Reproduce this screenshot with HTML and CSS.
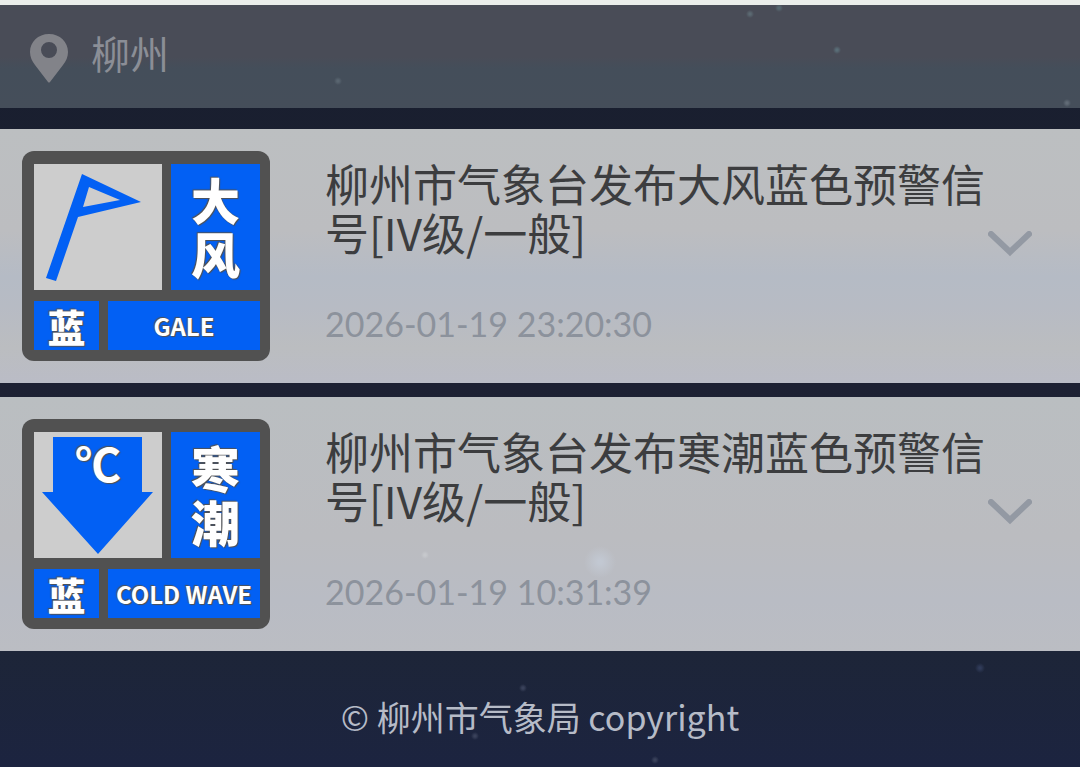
FILE: index.html
```
<!DOCTYPE html>
<html lang="zh-CN">
<head>
<meta charset="utf-8">
<meta name="viewport" content="width=device-width, initial-scale=1">
<title>柳州</title>
<link rel="stylesheet" href="styles.css">
</head>
<body>
<header class="location">
  <svg class="pin" viewBox="0 0 40 50" aria-hidden="true"><path fill-rule="evenodd" d="M20 1C9 1 1 9 1 19c0 5 2 9 5 13l13 17q1 1 2 0l13-17c3-4 5-8 5-13C39 9 31 1 20 1zM20 9a8 8 0 1 1 0 16 8 8 0 0 1 0-16z"/></svg>
  <h1 class="city">柳州</h1>
</header>
<main class="alerts">
  <article class="alert">
    <div class="badge">
      <div class="badge-row badge-top">
        <div class="symbol">
          <svg viewBox="0 0 128 126" role="img" aria-label="大风"><path fill-rule="evenodd" d="M48 10L107 38 44 53 22 117 12 114zM55 23L49 43 86 36z"/></svg>
        </div>
        <div class="kind"><span>大</span><span>风</span></div>
      </div>
      <div class="badge-row badge-bottom">
        <div class="level">蓝</div>
        <div class="kind-en">GALE</div>
      </div>
    </div>
    <div class="info">
      <h2 class="title">柳州市气象台发布大风蓝色预警信号[IV级/一般]</h2>
      <time class="time" datetime="2026-01-19T23:20:30">2026-01-19 23:20:30</time>
    </div>
    <button class="toggle" type="button" aria-label="展开">
      <svg viewBox="0 0 44 26" aria-hidden="true"><path d="M3 3L22 21 41 3"/></svg>
    </button>
  </article>
  <article class="alert alert-cold">
    <div class="badge">
      <div class="badge-row badge-top">
        <div class="symbol">
          <svg viewBox="0 0 128 126" role="img" aria-label="寒潮"><path d="M19 5H108V60H119L64 122 8 60H19z"/></svg>
          <span class="celsius">℃</span>
        </div>
        <div class="kind"><span>寒</span><span>潮</span></div>
      </div>
      <div class="badge-row badge-bottom">
        <div class="level">蓝</div>
        <div class="kind-en">COLD WAVE</div>
      </div>
    </div>
    <div class="info">
      <h2 class="title">柳州市气象台发布寒潮蓝色预警信号[IV级/一般]</h2>
      <time class="time" datetime="2026-01-19T10:31:39">2026-01-19 10:31:39</time>
    </div>
    <button class="toggle" type="button" aria-label="展开">
      <svg viewBox="0 0 44 26" aria-hidden="true"><path d="M3 3L22 21 41 3"/></svg>
    </button>
  </article>
</main>
<footer class="footer">© 柳州市气象局 copyright</footer>
</body>
</html>
```
FILE: styles.css
```
* { box-sizing: border-box; }

body {
  margin: 0;
  min-height: 100vh;
  display: flex;
  flex-direction: column;
  border-top: 5px solid #ebeeeb;
  background: linear-gradient(#181e2e, #1d2133 50%, #1d2538 85%, #1c2440);
  font-family: "Noto Sans CJK SC", sans-serif;
}

.location {
  display: flex;
  align-items: center;
  gap: 21px;
  height: 103px;
  padding: 2px 28px 0;
  background:
    radial-gradient(circle at 750px 9px, #5b6972 1px, transparent 4px),
    radial-gradient(circle at 779px 3px, #566770 1px, transparent 4px),
    radial-gradient(circle at 837px 45px, #596d77 1px, transparent 4px),
    radial-gradient(circle at 338px 76px, #596570 1px, transparent 4px),
    radial-gradient(circle at 1067px 98px, #616b76 1px, transparent 4px),
    linear-gradient(#494c57, #494c57 50%, #444e5a 62%, #454e5a);
}

.pin { width: 42px; height: 50px; fill: #828389; }

.city {
  margin: 0 0 12px;
  color: #8b8e96;
  font-size: 39px;
  font-weight: 400;
  line-height: 56px;
}

.alerts {
  display: flex;
  flex-direction: column;
  gap: 14px;
  margin-top: 21px;
}

.alert {
  display: flex;
  align-items: flex-start;
  min-height: 254px;
  padding: 22px 48px 22px 22px;
  background: linear-gradient(#bcbfc1, #bcbdc0 40%, #b5bbc5 58%, #b7bbc4 70%, #bbbdc0 86%, #babcc6);
}

.alert-cold {
  background:
    radial-gradient(circle at 600px 165px, #c2c8d2 2px, transparent 16px),
    radial-gradient(circle at 425px 158px, #c6c8cc 1px, transparent 4px),
    linear-gradient(#babec1, #bbbcc0 55%, #b9bcc4 80%, #bbbdc3);
}

.badge {
  flex: none;
  display: flex;
  flex-direction: column;
  gap: 11px;
  width: 248px;
  padding: 13px 10px 11px 12px;
  border-radius: 12px;
  background: #515151;
  color: #fff;
  font-weight: 900;
  text-shadow: 1px 1px 1px #515151, -1px -1px 1px #515151;
}

.badge-row { display: flex; gap: 9px; }
.badge-top { height: 126px; }
.badge-bottom { height: 49px; }

.symbol { position: relative; width: 128px; background: #cdcdcd; }
.symbol svg { display: block; width: 100%; fill: #0260f4; }

.celsius {
  position: absolute;
  inset: 3px 0 auto;
  font-size: 46px;
  font-weight: 700;
  line-height: 54px;
  text-align: center;
}

.kind, .level, .kind-en {
  display: flex;
  align-items: center;
  justify-content: center;
  background: #0260f4;
}

.kind {
  flex: 1;
  flex-direction: column;
  padding-bottom: 4px;
  gap: 5px;
  font-size: 49px;
  line-height: 49px;
}

.level { flex: none; width: 65px; font-size: 38px; line-height: 48px; }

.kind-en {
  flex: 1;
  font-size: 24px;
  font-weight: 700;
  line-height: 48px;
  white-space: nowrap;
}

.info { flex: 1; padding-left: 55px; }

.title {
  margin: 0;
  padding-top: 8px;
  color: #3c3d3f;
  font-size: 44px;
  font-weight: 400;
  line-height: 49px;
}

.time {
  display: block;
  margin-top: 45px;
  color: #8c929c;
  font-family: Lato, sans-serif;
  font-size: 34px;
  line-height: 44px;
}

.toggle {
  flex: none;
  align-self: center;
  margin-bottom: 24px;
  padding: 0;
  border: 0;
  background: none;
  cursor: pointer;
}

.toggle svg {
  display: block;
  width: 44px;
  fill: none;
  stroke: #9399a3;
  stroke-width: 6px;
  stroke-linecap: round;
}

.footer {
  flex: 1;
  padding-top: 42px;
  background:
    radial-gradient(circle at 523px 37px, #39415a 1px, transparent 4px),
    radial-gradient(circle at 475px 85px, #39415a 1px, transparent 4px),
    radial-gradient(circle at 655px 109px, #39415a 1px, transparent 4px),
    radial-gradient(circle at 980px 17px, #303b59 1px, transparent 5px);
  color: #b6bbc7;
  font-size: 34px;
  line-height: 48px;
  text-align: center;
}
```
